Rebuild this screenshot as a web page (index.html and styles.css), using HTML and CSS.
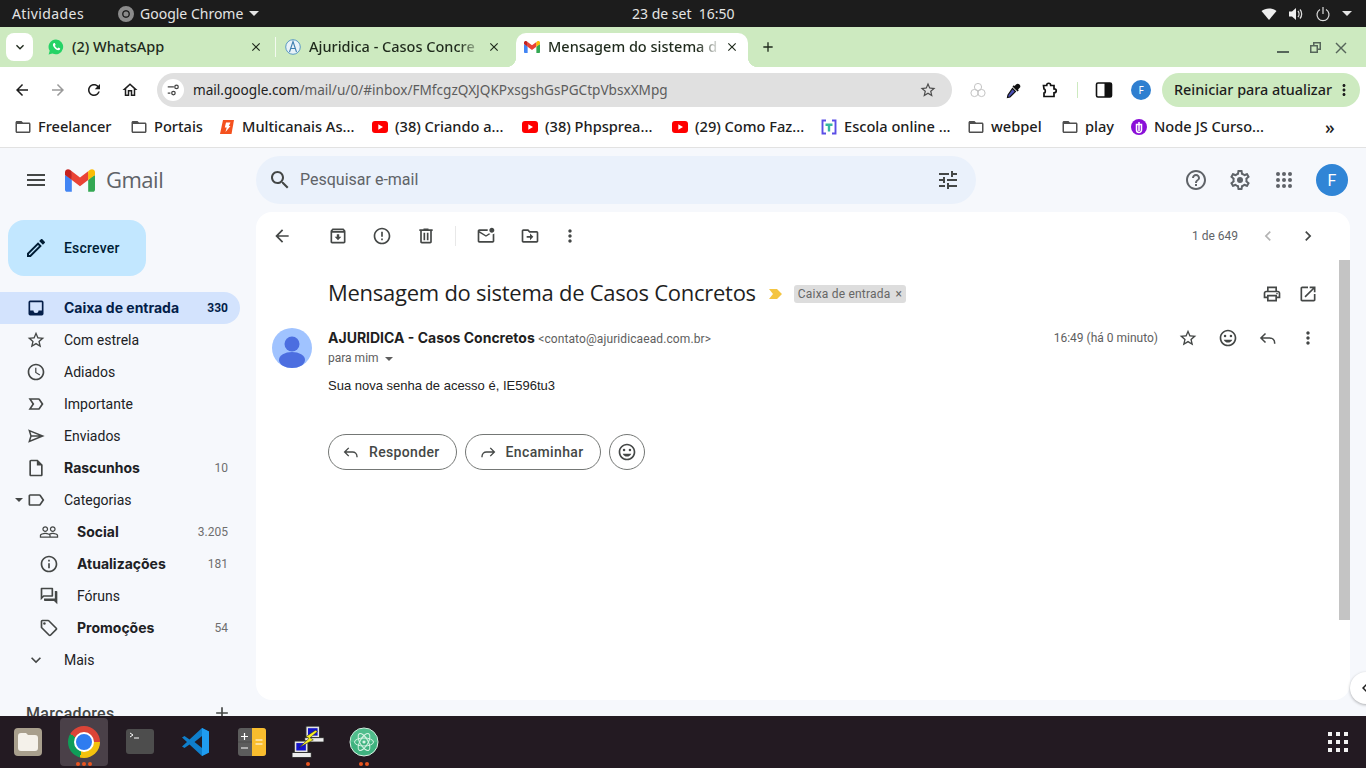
FILE: index.html
```html
<!DOCTYPE html>
<html lang="pt-BR">
<head>
    <meta charset="UTF-8">
    <title>Mensagem do sistema de Casos Concretos</title>
    <link rel="stylesheet" href="styles.css">
</head>
<body>
    <svg class="defs" width="0" height="0">
        <symbol id="i-back" viewBox="0 0 24 24"><path d="M20 11H7.83l5.59-5.59L12 4l-8 8 8 8 1.41-1.41L7.83 13H20v-2z"/></symbol>
        <symbol id="i-refresh" viewBox="0 0 24 24"><path d="M17.65 6.35C16.2 4.9 14.21 4 12 4c-4.42 0-7.99 3.58-7.99 8s3.57 8 7.99 8c3.73 0 6.84-2.55 7.73-6h-2.08c-.82 2.33-3.04 4-5.65 4-3.31 0-6-2.69-6-6s2.69-6 6-6c1.66 0 3.14.69 4.22 1.78L13 11h7V4l-2.35 2.35z"/></symbol>
        <symbol id="i-home" viewBox="0 0 24 24"><path d="M12 5.69l5 4.5V18h-2v-6H9v6H7v-7.81l5-4.5M12 3L2 12h3v8h6v-6h2v6h6v-8h3L12 3z"/></symbol>
        <symbol id="i-star" viewBox="0 0 24 24"><path d="M22 9.24l-7.19-.62L12 2 9.19 8.63 2 9.24l5.46 4.73L5.82 21 12 17.27 18.18 21l-1.63-7.03L22 9.24zM12 15.4l-3.76 2.27 1-4.28-3.32-2.88 4.38-.38L12 6.1l1.71 4.04 4.38.38-3.32 2.88 1 4.28L12 15.4z"/></symbol>
        <symbol id="i-folder" viewBox="0 0 24 24"><path d="M20 6h-8l-2-2H4c-1.1 0-2 .9-2 2v12c0 1.1.9 2 2 2h16c1.1 0 2-.9 2-2V8c0-1.1-.9-2-2-2zm0 12H4V8h16v10z"/></symbol>
        <symbol id="i-close" viewBox="0 0 24 24"><path d="M19 6.41L17.59 5 12 10.59 6.41 5 5 6.41 10.59 12 5 17.59 6.41 19 12 13.41 17.59 19 19 17.59 13.41 12z"/></symbol>
        <symbol id="i-add" viewBox="0 0 24 24"><path d="M19 13h-6v6h-2v-6H5v-2h6V5h2v6h6v2z"/></symbol>
        <symbol id="i-expand" viewBox="0 0 24 24"><path d="M16.59 8.59L12 13.17 7.41 8.59 6 10l6 6 6-6z"/></symbol>
        <symbol id="i-left" viewBox="0 0 24 24"><path d="M15.41 7.41L14 6l-6 6 6 6 1.41-1.41L10.83 12z"/></symbol>
        <symbol id="i-right" viewBox="0 0 24 24"><path d="M10 6L8.59 7.41 13.17 12l-4.58 4.59L10 18l6-6z"/></symbol>
        <symbol id="i-more" viewBox="0 0 24 24"><path d="M12 8c1.1 0 2-.9 2-2s-.9-2-2-2-2 .9-2 2 .9 2 2 2zm0 2c-1.1 0-2 .9-2 2s.9 2 2 2 2-.9 2-2-.9-2-2-2zm0 6c-1.1 0-2 .9-2 2s.9 2 2 2 2-.9 2-2-.9-2-2-2z"/></symbol>
        <symbol id="i-smile" viewBox="0 0 24 24"><path d="M11.99 2C6.47 2 2 6.48 2 12s4.47 10 9.99 10C17.52 22 22 17.52 22 12S17.52 2 11.99 2zM12 20c-4.42 0-8-3.58-8-8s3.58-8 8-8 8 3.58 8 8-3.58 8-8 8z"/><circle cx="8.5" cy="9.5" r="1.5"/><circle cx="15.5" cy="9.5" r="1.5"/><path d="M12 17.5c2.33 0 4.3-1.46 5.11-3.5H6.89c.8 2.04 2.78 3.5 5.11 3.5z"/></symbol>
        <symbol id="i-reply" viewBox="0 0 24 24"><path d="M9 6.5L3.5 12 9 17.5M4 12h10c3.3 0 6 2.4 6 6v1" fill="none" stroke="currentColor" stroke-width="1.8"/></symbol>
        <symbol id="i-forward" viewBox="0 0 24 24"><path d="M15 6.5l5.500 5.500-5.500 5.500M20 12H10c-3.300 0-6 2.400-6 6v1" fill="none" stroke="currentColor" stroke-width="1.8"/></symbol>
        <symbol id="i-youtube" viewBox="0 0 16 12"><rect width="16" height="12" rx="3" fill="#f00"/><path d="M6.300 3.200v5.600L11 6z" fill="#fff"/></symbol>
    </svg>

    <div class="topbar">
        <span class="activities">Atividades</span>
        <span class="app-menu">
            <span class="app-icon"></span>
            Google Chrome
            <span class="caret"></span>
        </span>
        <span class="clock">23 de set&nbsp; 16:50</span>
        <span class="tray">
            <svg class="tray-icon" viewBox="0 0 16 16"><path d="M8 14L.5 5C4.500 1.500 11.500 1.500 15.500 5z"/></svg>
            <svg class="tray-icon" viewBox="0 0 16 16"><path d="M1 5.500h3L8 2v12l-4-3.500H1z"/><path d="M10 5c1.300 1.600 1.300 4.400 0 6M12 3.500c2.200 2.500 2.200 6.500 0 9" fill="none" stroke="#ddd" stroke-width="1.300"/></svg>
            <svg class="tray-icon" viewBox="0 0 16 16"><path d="M5 3.500a6 6 0 1 0 6 0M8 1v7" fill="none" stroke="#ddd" stroke-width="1.200"/></svg>
            <span class="caret"></span>
        </span>
    </div>

    <div class="tabstrip">
        <span class="tab-search"><svg class="icon-16"><use href="#i-expand"/></svg></span>
        <div class="tab tab-first">
            <svg class="favicon" viewBox="0 0 16 16"><path d="M8 .500A7.400 7.400 0 0 0 1.700 11.800L.6 15.500l3.800-1A7.400 7.400 0 1 0 8 .500z" fill="#25d366"/><path d="M5.600 4.200c-1 .9-1 2.300.3 4 1.300 1.800 3 3 4.500 3.100 1 0 1.900-.8 1.800-1.700L10.500 8.500l-1 1C8.400 9 7.400 8 6.800 6.800l.9-.9L6.800 4c-.4 0-.9 0-1.200.2z" fill="#fff"/></svg>
            <span class="tab-title plain">(2) WhatsApp</span>
            <svg class="tab-close"><use href="#i-close"/></svg>
        </div>
        <span class="tab-sep"></span>
        <div class="tab tab-second">
            <svg class="favicon" viewBox="0 0 16 16"><circle cx="8" cy="8" r="7.300" fill="#e8f2f8" stroke="#5b9ac4"/><path d="M4.500 13L8 2.500l3.500 10.500M5.500 9.500h5" fill="none" stroke="#3f7fb0" stroke-width="1.100"/></svg>
            <span class="tab-title">Ajuridica - Casos Concre</span>
            <svg class="tab-close"><use href="#i-close"/></svg>
        </div>
        <div class="tab tab-active">
            <svg class="favicon" viewBox="0 0 256 193"><use href="#gmail-m"/></svg>
            <span class="tab-title">Mensagem do sistema d</span>
            <svg class="tab-close"><use href="#i-close"/></svg>
        </div>
        <svg class="new-tab"><use href="#i-add"/></svg>
        <span class="window-controls">
            <svg class="win-icon win-min" viewBox="0 0 14 14"><rect x="1" y="10" width="12" height="2"/></svg>
            <svg class="win-icon" viewBox="0 0 14 14"><path d="M5 1h8v8h-3v3H2V4h3zm1.500 1.500V4H10v3.500h1.500v-5zM3.500 5.500v5h5v-5z"/></svg>
            <svg class="win-icon" viewBox="0 0 14 14"><path d="M2.500 1.500l4.500 4.500 4.500-4.500 1 1L8 7l4.500 4.500-1 1L7 8l-4.500 4.500-1-1L6 7 1.500 2.500z"/></svg>
        </span>
    </div>

    <div class="toolbar">
        <svg class="nav-icon"><use href="#i-back"/></svg>
        <svg class="nav-icon nav-off"><use href="#i-back" transform="matrix(-1 0 0 1 18 0)"/></svg>
        <svg class="nav-icon"><use href="#i-refresh"/></svg>
        <svg class="nav-icon"><use href="#i-home"/></svg>
        <div class="omnibox">
            <span class="site-info">
                <svg viewBox="0 0 16 16" width="14" height="14"><path d="M2 4.500h7M2 11.500h3" stroke="#444" stroke-width="1.500" fill="none"/><circle cx="12" cy="4.500" r="2" fill="none" stroke="#444" stroke-width="1.400"/><circle cx="8.500" cy="11.500" r="2" fill="none" stroke="#444" stroke-width="1.400"/></svg>
            </span>
            <span class="url"><b>mail.google.com</b>/mail/u/0/#inbox/FMfcgzQXJQKPxsgshGsPGCtpVbsxXMpg</span>
            <svg class="omni-star"><use href="#i-star"/></svg>
        </div>
        <div class="extensions">
            <svg class="ext-icon" viewBox="0 0 18 18"><g fill="none" stroke="#c4c4c4"><circle cx="9" cy="6" r="3.600"/><circle cx="5.500" cy="12" r="3.600"/><circle cx="12.500" cy="12" r="3.600"/></g></svg>
            <svg class="ext-icon" viewBox="0 0 18 18"><path d="M7.500 7.500l3 3L5 16l-2.500.5.500-2.500z" fill="#4a4fb5" stroke="#111" stroke-width="1.200"/><path d="M11 3.500a2.300 2.300 0 0 1 3.500 3.500L13 8.500l.8.8-1.300 1.300-5-5 1.300-1.300.8.8z" fill="#111"/></svg>
            <svg class="ext-icon" viewBox="0 0 18 18"><path d="M2.500 4.500h3.200c0-3 4-3 4 0h3.300v3.300c3 0 3 4 0 4v3.700H3v-3.300c1.700 0 1.700-4.200 0-4.200z" fill="none" stroke="#111" stroke-width="1.700"/></svg>
            <span class="ext-sep"></span>
            <svg class="ext-icon" viewBox="0 0 18 18"><rect x="1.500" y="2" width="15" height="14" rx="1.500" fill="#fff" stroke="#111" stroke-width="1.600"/><rect x="9.500" y="2" width="7" height="14" fill="#111"/></svg>
            <span class="small-avatar">F</span>
        </div>
        <div class="update-pill">
            <span class="pill-text">Reiniciar para atualizar</span>
            <svg class="icon-18"><use href="#i-more"/></svg>
        </div>
    </div>

    <div class="bookmarks">
        <span class="bookmark"><svg class="bm-folder"><use href="#i-folder"/></svg>Freelancer</span>
        <span class="bookmark"><svg class="bm-folder"><use href="#i-folder"/></svg>Portais</span>
        <span class="bookmark"><svg class="bm-icon" viewBox="0 0 16 16"><path d="M4 1h11l-2.500 14H1z" fill="#f4511e"/><path d="M7 3.500h4.500L9.800 7h1.700L6.500 13l1.200-4.500H5.800z" fill="#fff"/></svg>Multicanais As...</span>
        <span class="bookmark"><svg class="bm-icon"><use href="#i-youtube"/></svg>(38) Criando a...</span>
        <span class="bookmark"><svg class="bm-icon"><use href="#i-youtube"/></svg>(38) Phpsprea...</span>
        <span class="bookmark"><svg class="bm-icon"><use href="#i-youtube"/></svg>(29) Como Faz...</span>
        <span class="bookmark"><svg class="bm-icon" viewBox="0 0 16 16"><path d="M5 1.500H1.500v13H5M11 1.500h3.500v13H11" fill="none" stroke="#5b4ee6" stroke-width="1.900"/><path d="M4.500 4.500h7V7H9.200v5.500H6.800V7H4.500z" fill="#35b6a0"/></svg>Escola online ...</span>
        <span class="bookmark"><svg class="bm-folder"><use href="#i-folder"/></svg>webpel</span>
        <span class="bookmark"><svg class="bm-folder"><use href="#i-folder"/></svg>play</span>
        <span class="bookmark"><svg class="bm-icon" viewBox="0 0 16 16"><circle cx="8" cy="8" r="8" fill="#8a0fd8"/><path d="M5.500 5.500h5v5.500a2.500 2.500 0 0 1-5 0zM8 3v9" fill="none" stroke="#fff" stroke-width="1.500"/></svg>Node JS Curso...</span>
        <span class="bm-more">»</span>
    </div>

    <div class="gmail">
        <aside class="sidebar">
            <div class="brand">
                <svg class="icon-24 menu-icon" viewBox="0 0 24 24"><path d="M3 18h18v-2H3v2zm0-5h18v-2H3v2zm0-7v2h18V6H3z"/></svg>
                <svg class="gmail-logo" viewBox="0 0 256 193">
                    <g id="gmail-m">
                        <path fill="#4285F4" d="M58.180 192.050V93.140L27.500 65.080 0 49.500v125.090c0 9.660 7.830 17.460 17.450 17.460h40.730z"/>
                        <path fill="#34A853" d="M197.820 192.050h40.730c9.650 0 17.450-7.830 17.450-17.450V49.500l-31.160 17.840-27.020 25.800v98.910z"/>
                        <path fill="#EA4335" d="M58.180 93.140l-4.170-38.650 4.170-36.990L128 69.870l69.820-52.370 4.670 35-4.670 40.640L128 145.500z"/>
                        <path fill="#FBBC04" d="M197.820 17.500V93.140L256 49.500V26.230c0-21.580-24.640-33.890-41.890-20.950z"/>
                        <path fill="#C5221F" d="M0 49.500l26.760 20.070L58.180 93.140V17.500L41.890 5.280C24.610-7.660 0 4.650 0 26.230V49.500z"/>
                    </g>
                </svg>
                <span class="wordmark">Gmail</span>
            </div>
            <div class="compose">
                <svg class="icon-24" viewBox="0 0 24 24"><path d="M14.060 9.020l.92.920L5.920 19H5v-.92l9.060-9.060M17.660 3c-.25 0-.51.100-.7.290l-1.830 1.830 3.750 3.750 1.830-1.830c.39-.39.39-1.020 0-1.410l-2.340-2.340c-.2-.2-.45-.29-.71-.29zm-3.600 3.190L3 17.250V21h3.750L17.810 9.940l-3.750-3.750z"/></svg>
                Escrever
            </div>
            <nav class="nav-list">
                <a class="nav-row selected bold">
                    <svg class="nav-glyph" viewBox="0 0 24 24"><path d="M19 3H5a2 2 0 0 0-2 2v14a2 2 0 0 0 2 2h14a2 2 0 0 0 2-2V5a2 2 0 0 0-2-2zm0 12h-4a3 3 0 0 1-6 0H5V5h14z"/></svg>
                    <span class="nav-label">Caixa de entrada</span><span class="count">330</span>
                </a>
                <a class="nav-row"><svg class="nav-glyph"><use href="#i-star"/></svg><span class="nav-label">Com estrela</span></a>
                <a class="nav-row">
                    <svg class="nav-glyph" viewBox="0 0 24 24"><path d="M11.990 2C6.470 2 2 6.480 2 12s4.470 10 9.990 10C17.520 22 22 17.520 22 12S17.520 2 11.990 2zM12 20c-4.420 0-8-3.580-8-8s3.580-8 8-8 8 3.580 8 8-3.580 8-8 8zm.5-13H11v6l5.250 3.150.75-1.230-4.500-2.670z"/></svg>
                    <span class="nav-label">Adiados</span>
                </a>
                <a class="nav-row">
                    <svg class="nav-glyph" viewBox="0 0 24 24"><path d="M15 19H3l4.500-7L3 5h12c.65 0 1.260.310 1.630.840L21 12l-4.370 6.160c-.37.520-.98.840-1.630.840zm-8.500-2H15l3.500-5-3.500-5H6.500l3.500 5-3.500 5z"/></svg>
                    <span class="nav-label">Importante</span>
                </a>
                <a class="nav-row">
                    <svg class="nav-glyph" viewBox="0 0 24 24"><path d="M4 5.500l16 6.500-16 6.500 2-6.500zM6 12h14" fill="none" stroke="currentColor" stroke-width="1.800"/></svg>
                    <span class="nav-label">Enviados</span>
                </a>
                <a class="nav-row bold">
                    <svg class="nav-glyph" viewBox="0 0 24 24"><path d="M14 2H6c-1.100 0-1.990.9-1.990 2L4 20c0 1.100.89 2 1.990 2H18c1.100 0 2-.9 2-2V8l-6-6zM6 20V4h7v5h5v11H6z"/></svg>
                    <span class="nav-label">Rascunhos</span><span class="count">10</span>
                </a>
                <a class="nav-row">
                    <span class="tree-caret"></span>
                    <svg class="nav-glyph" viewBox="0 0 24 24"><path d="M17.630 5.840C17.270 5.330 16.670 5 16 5L5 5.010C3.900 5.010 3 5.900 3 7v10c0 1.100.9 1.990 2 1.990L16 19c.67 0 1.270-.33 1.630-.84L22 12l-4.370-6.160zM16 17H5V7h11l3.550 5L16 17z"/></svg>
                    <span class="nav-label">Categorias</span>
                </a>
                <a class="nav-row sub bold">
                    <svg class="nav-glyph" viewBox="0 0 24 24"><path d="M16.500 13c-1.200 0-3.070.34-4.500 1-1.430-.67-3.300-1-4.500-1C5.330 13 1 14.080 1 16.250V19h22v-2.750c0-2.170-4.330-3.250-6.500-3.250zm-4 4.500h-10v-1.250c0-.54 2.560-1.750 5-1.750s5 1.210 5 1.750v1.250zm9 0H14v-1.250c0-.46-.2-.86-.52-1.220.88-.3 1.960-.53 3.020-.53 2.440 0 5 1.210 5 1.750v1.250zM7.500 12c1.930 0 3.500-1.570 3.500-3.500S9.430 5 7.500 5 4 6.570 4 8.500 5.570 12 7.500 12zm0-5.500c1.100 0 2 .9 2 2s-.9 2-2 2-2-.9-2-2 .9-2 2-2zm9 5.500c1.930 0 3.500-1.570 3.500-3.500S18.430 5 16.500 5 13 6.570 13 8.500s1.570 3.500 3.500 3.500zm0-5.500c1.100 0 2 .9 2 2s-.9 2-2 2-2-.9-2-2 .9-2 2-2z"/></svg>
                    <span class="nav-label">Social</span><span class="count">3.205</span>
                </a>
                <a class="nav-row sub bold">
                    <svg class="nav-glyph" viewBox="0 0 24 24"><path d="M11 7h2v2h-2zm0 4h2v6h-2zm1-9C6.480 2 2 6.480 2 12s4.480 10 10 10 10-4.480 10-10S17.520 2 12 2zm0 18c-4.410 0-8-3.590-8-8s3.590-8 8-8 8 3.590 8 8-3.590 8-8 8z"/></svg>
                    <span class="nav-label">Atualizações</span><span class="count">181</span>
                </a>
                <a class="nav-row sub">
                    <svg class="nav-glyph" viewBox="0 0 24 24"><path d="M15 4v7H5.170L4 12.170V4h11m1-2H3c-.55 0-1 .45-1 1v14l4-4h10c.55 0 1-.45 1-1V3c0-.55-.45-1-1-1zm5 4h-2v9H6v2c0 .55.45 1 1 1h11l4 4V7c0-.55-.45-1-1-1z"/></svg>
                    <span class="nav-label">Fóruns</span>
                </a>
                <a class="nav-row sub bold">
                    <svg class="nav-glyph" viewBox="0 0 24 24"><path d="M21.410 11.580l-9-9C12.050 2.220 11.550 2 11 2H4c-1.100 0-2 .9-2 2v7c0 .55.22 1.050.59 1.420l9 9c.36.36.86.58 1.410.58s1.050-.22 1.410-.59l7-7c.37-.36.59-.86.59-1.410s-.23-1.060-.59-1.420zM13 20.010L4 11V4h7v-.01l9 9-7 7.020z"/><circle cx="6.500" cy="6.500" r="1.500"/></svg>
                    <span class="nav-label">Promoções</span><span class="count">54</span>
                </a>
                <a class="nav-row"><svg class="nav-glyph"><use href="#i-expand"/></svg><span class="nav-label">Mais</span></a>
            </nav>
            <div class="labels-head">
                <span>Marcadores</span>
                <svg class="icon-20"><use href="#i-add"/></svg>
            </div>
        </aside>

        <main class="content">
            <header class="gm-header">
                <div class="searchbox">
                    <svg class="icon-24" viewBox="0 0 24 24"><path d="M15.500 14h-.79l-.28-.27C15.410 12.590 16 11.110 16 9.500 16 5.910 13.090 3 9.500 3S3 5.910 3 9.500 5.910 16 9.500 16c1.610 0 3.090-.59 4.230-1.570l.27.28v.79l5 4.990L20.490 19l-4.990-5zm-6 0C7.010 14 5 11.990 5 9.500S7.010 5 9.500 5 14 7.010 14 9.500 11.990 14 9.500 14z"/></svg>
                    <span class="search-text">Pesquisar e-mail</span>
                    <svg class="icon-24" viewBox="0 0 24 24"><path d="M3 17v2h6v-2H3zM3 5v2h10V5H3zm10 16v-2h8v-2h-8v-2h-2v6h2zM7 9v2H3v2h4v2h2V9H7zm14 4v-2H11v2h10zm-6-4h2V7h4V5h-4V3h-2v6z"/></svg>
                </div>
                <div class="header-actions">
                    <svg class="icon-24" viewBox="0 0 24 24"><path d="M11 18h2v-2h-2v2zm1-16C6.480 2 2 6.480 2 12s4.480 10 10 10 10-4.480 10-10S17.520 2 12 2zm0 18c-4.410 0-8-3.590-8-8s3.590-8 8-8 8 3.590 8 8-3.590 8-8 8zm0-14c-2.210 0-4 1.790-4 4h2c0-1.100.9-2 2-2s2 .9 2 2c0 2-3 1.750-3 5h2c0-2.250 3-2.500 3-5 0-2.210-1.790-4-4-4z"/></svg>
                    <svg class="icon-24" viewBox="0 0 24 24"><path d="M19.430 12.980c.04-.32.07-.64.07-.98 0-.34-.03-.66-.07-.98l2.110-1.650c.19-.15.24-.42.12-.64l-2-3.460c-.09-.16-.26-.25-.44-.25-.06 0-.12.010-.17.030l-2.490 1c-.52-.4-1.080-.73-1.690-.98l-.38-2.650C14.460 2.180 14.250 2 14 2h-4c-.25 0-.46.180-.49.420l-.38 2.650c-.61.250-1.170.590-1.690.980l-2.490-1c-.06-.02-.12-.03-.18-.03-.17 0-.34.090-.43.250l-2 3.460c-.13.220-.07.490.12.640l2.110 1.650c-.04.320-.07.650-.07.980 0 .33.030.66.070.98l-2.110 1.650c-.19.150-.24.420-.12.640l2 3.460c.09.160.26.250.44.250.06 0 .12-.01.17-.03l2.490-1c.52.400 1.080.730 1.690.980l.38 2.650c.03.240.24.420.49.420h4c.25 0 .46-.18.49-.42l.38-2.650c.61-.25 1.170-.59 1.690-.98l2.490 1c.06.020.12.030.18.030.17 0 .34-.09.43-.25l2-3.460c.12-.22.07-.49-.12-.64l-2.110-1.650zm-1.980-1.710c.04.310.05.520.05.730 0 .21-.02.430-.05.730l-.14 1.130.89.700 1.080.840-.7 1.210-1.270-.51-1.040-.42-.9.680c-.43.320-.84.560-1.250.730l-1.060.430-.16 1.130-.2 1.350h-1.400l-.19-1.350-.16-1.130-1.060-.43c-.43-.18-.83-.41-1.230-.71l-.91-.7-1.060.43-1.270.51-.7-1.210 1.080-.84.89-.7-.14-1.130c-.03-.31-.05-.54-.05-.74s.02-.43.05-.73l.14-1.130-.89-.7-1.080-.84.7-1.210 1.270.51 1.040.42.9-.68c.43-.32.84-.56 1.250-.73l1.060-.43.16-1.130.2-1.350h1.390l.19 1.350.16 1.130 1.060.43c.43.180.83.410 1.230.710l.91.700 1.060-.43 1.270-.51.7 1.210-1.070.850-.89.700.14 1.130z"/><circle cx="12" cy="12" r="3"/></svg>
                    <svg class="icon-24" viewBox="0 0 24 24"><g><circle cx="6" cy="6" r="2"/><circle cx="12" cy="6" r="2"/><circle cx="18" cy="6" r="2"/><circle cx="6" cy="12" r="2"/><circle cx="12" cy="12" r="2"/><circle cx="18" cy="12" r="2"/><circle cx="6" cy="18" r="2"/><circle cx="12" cy="18" r="2"/><circle cx="18" cy="18" r="2"/></g></svg>
                    <span class="account">F</span>
                </div>
            </header>

            <section class="card">
                <div class="mail-toolbar">
                    <svg class="tool tool-back"><use href="#i-back"/></svg>
                    <svg class="tool" viewBox="0 0 24 24"><path d="M20.540 5.230l-1.390-1.680C18.880 3.210 18.470 3 18 3H6c-.47 0-.88.210-1.160.550L3.460 5.230C3.170 5.570 3 6.020 3 6.500V19c0 1.100.9 2 2 2h14c1.100 0 2-.9 2-2V6.500c0-.48-.17-.93-.46-1.270zM6.240 5h11.520l.83 1H5.420l.82-1zM5 19V8h14v11H5zm8.450-9h-2.900v3H8l4 4 4-4h-2.550z"/></svg>
                    <svg class="tool" viewBox="0 0 24 24"><path d="M11 15h2v2h-2zm0-8h2v6h-2zm1-5C6.480 2 2 6.480 2 12s4.480 10 10 10 10-4.480 10-10S17.520 2 12 2zm0 18c-4.410 0-8-3.590-8-8s3.590-8 8-8 8 3.590 8 8-3.590 8-8 8z"/></svg>
                    <svg class="tool" viewBox="0 0 24 24"><path d="M15 4V3H9v1H4v2h1v13c0 1.100.9 2 2 2h10c1.100 0 2-.9 2-2V6h1V4h-5zm2 15H7V6h10v13zM9 8h2v9H9zm4 0h2v9h-2z"/></svg>
                    <span class="tool-sep"></span>
                    <svg class="tool" viewBox="0 0 24 24"><path d="M22 8.980V18c0 1.100-.9 2-2 2H4c-1.100 0-2-.9-2-2V6c0-1.100.9-2 2-2h10.100c-.06.320-.1.660-.1 1 0 .34.040.680.1 1H4l8 5 3.670-2.290c.47.430 1.020.760 1.630.980L12 13 4 8v10h16V9.900c.74-.15 1.420-.48 2-.92zM16 5c0 1.660 1.340 3 3 3s3-1.340 3-3-1.340-3-3-3-3 1.340-3 3z"/></svg>
                    <svg class="tool" viewBox="0 0 24 24"><path d="M20 6h-8l-2-2H4c-1.100 0-2 .9-2 2v12c0 1.100.9 2 2 2h16c1.100 0 2-.9 2-2V8c0-1.100-.9-2-2-2zm0 12H4V6h5.170l2 2H20v10zm-8-1l4-4-4-4v3H8v2h4v3z"/></svg>
                    <svg class="tool tool-more"><use href="#i-more"/></svg>
                    <span class="pager">1 de 649</span>
                    <svg class="tool tool-prev"><use href="#i-left"/></svg>
                    <svg class="tool tool-next"><use href="#i-right"/></svg>
                </div>

                <div class="subject-row">
                    <h1 class="subject">Mensagem do sistema de Casos Concretos</h1>
                    <svg class="marker" viewBox="0 0 14 10"><path d="M0 0h8l5 5-5 5H0l4-5z"/></svg>
                    <span class="chip">Caixa de entrada <i>×</i></span>
                    <span class="subject-actions">
                        <svg class="tool" viewBox="0 0 24 24"><path d="M19 8h-1V3H6v5H5c-1.660 0-3 1.340-3 3v6h4v4h12v-4h4v-6c0-1.660-1.340-3-3-3zM8 5h8v3H8V5zm8 14H8v-4h8v4zm2-4v-2H6v2H4v-4c0-.55.45-1 1-1h14c.55 0 1 .45 1 1v4h-2z"/><circle cx="18" cy="11.500" r="1"/></svg>
                        <svg class="tool" viewBox="0 0 24 24"><path d="M19 19H5V5h7V3H5c-1.110 0-2 .9-2 2v14c0 1.100.89 2 2 2h14c1.100 0 2-.9 2-2v-7h-2v7zM14 3v2h3.590l-9.830 9.830 1.410 1.410L19 6.410V10h2V3h-7z"/></svg>
                    </span>
                </div>

                <div class="message">
                    <svg class="avatar" viewBox="0 0 40 40"><circle cx="20" cy="20" r="20" fill="#a0c3ff"/><circle cx="20" cy="16" r="7.500" fill="#4c6ee0"/><ellipse cx="20" cy="32" rx="13" ry="8" fill="#4c6ee0"/></svg>
                    <div class="message-main">
                        <div class="sender-row">
                            <div class="sender">
                                <strong>AJURIDICA - Casos Concretos</strong>
                                <span class="address">&lt;contato@ajuridicaead.com.br&gt;</span>
                            </div>
                            <span class="time">16:49 (há 0 minuto)</span>
                            <svg class="tool msg-star"><use href="#i-star"/></svg>
                            <svg class="tool msg-action"><use href="#i-smile"/></svg>
                            <svg class="tool msg-action"><use href="#i-reply"/></svg>
                            <svg class="tool msg-action"><use href="#i-more"/></svg>
                        </div>
                        <div class="to-me">para mim <span class="to-caret"></span></div>
                        <p class="body-text">Sua nova senha de acesso é, IE596tu3</p>
                        <div class="reply-buttons">
                            <span class="pill-btn"><svg class="tool"><use href="#i-reply"/></svg>Responder</span>
                            <span class="pill-btn"><svg class="tool"><use href="#i-forward"/></svg>Encaminhar</span>
                            <span class="emoji-btn"><svg class="tool"><use href="#i-smile"/></svg></span>
                        </div>
                    </div>
                </div>
                <div class="scroll-thumb"></div>
            </section>
            <span class="panel-toggle"><svg class="icon-18"><use href="#i-left"/></svg></span>
        </main>
    </div>

    <div class="dock">
        <div class="dock-item">
            <svg class="dock-icon" viewBox="0 0 30 30"><rect x="1" y="1" width="28" height="28" rx="4" fill="#a89f8d"/><path d="M5 9a3 3 0 0 1 3-3h5l2 2h7a3 3 0 0 1 3 3v10a3 3 0 0 1-3 3H8a3 3 0 0 1-3-3z" fill="#f4f1ea"/></svg>
        </div>
        <div class="dock-item active">
            <span class="chrome-logo"></span>
            <span class="dots"><i></i><i></i><i></i></span>
        </div>
        <div class="dock-item">
            <svg class="dock-icon" viewBox="0 0 30 30"><rect x="1" y="2" width="28" height="25" rx="3" fill="#4d4d4d"/><path d="M5 6l3 2-3 2" fill="none" stroke="#fff"/><path d="M9 11h5" stroke="#fff"/></svg>
        </div>
        <div class="dock-item">
            <svg class="dock-icon" viewBox="0 0 30 30"><path d="M21 1l7 3.500v21L21 29 8.500 17.500 3.500 21 1 19.500 6 15 1 10.500 3.500 9l5 3.500z" fill="#0f7fcc"/><path d="M21 1l7 3.500v21L21 29z" fill="#1f9cf0"/><path d="M21 9l-7.500 6 7.500 6z" fill="#231a22"/></svg>
        </div>
        <div class="dock-item">
            <svg class="dock-icon" viewBox="0 0 30 30"><rect x="1" y="1" width="28" height="28" rx="3" fill="#5c5c5c"/><path d="M15 1h11a3 3 0 0 1 3 3v22a3 3 0 0 1-3 3H15z" fill="#f9bd2e"/><path d="M4 9.500h7M7.500 6v7M4 21h7M18.500 13h7M18.500 17h7" stroke="#fff" stroke-width="1.200"/><path d="M1 15h14" stroke="#4a4a4a"/></svg>
        </div>
        <div class="dock-item">
            <svg class="dock-icon dock-icon-lg" viewBox="0 0 32 32"><rect x="14" y="1" width="13" height="11" fill="#e4e4e4" stroke="#222"/><rect x="16" y="3" width="9" height="7" fill="#1313c8"/><rect x="13" y="12" width="18" height="4" fill="#ededed" stroke="#222" stroke-width=".7"/><rect x="3" y="15" width="13" height="11" fill="#e4e4e4" stroke="#222"/><rect x="5" y="17" width="9" height="7" fill="#1313c8"/><rect x="1" y="26" width="18" height="4.500" fill="#ededed" stroke="#222" stroke-width=".7"/><path d="M23 5l-9 6 3 1.500L8 21l13-7-3-2 7-6z" fill="#f7ef24" stroke="#222" stroke-width=".5"/></svg>
            <span class="dots"><i></i></span>
        </div>
        <div class="dock-item">
            <svg class="dock-icon" viewBox="0 0 30 30"><circle cx="15" cy="15" r="14" fill="#3fb27f" stroke="#dff3e8" stroke-width="1"/><path d="M15 1.500A13.500 13.500 0 0 1 28.500 15h-27A13.500 13.500 0 0 1 15 1.500z" fill="#62c79a" opacity=".5"/><g fill="none" stroke="#d8f3e4" stroke-width="1"><ellipse cx="15" cy="15" rx="9.500" ry="4"/><ellipse cx="15" cy="15" rx="9.500" ry="4" transform="rotate(60 15 15)"/><ellipse cx="15" cy="15" rx="9.500" ry="4" transform="rotate(120 15 15)"/></g><circle cx="15" cy="15" r="1.600" fill="#d8f3e4"/></svg>
            <span class="dots"><i></i><i></i></span>
        </div>
        <div class="show-apps">
            <i></i><i></i><i></i><i></i><i></i><i></i><i></i><i></i><i></i>
        </div>
    </div>
</body>
</html>
```
FILE: styles.css
```css
* {
    box-sizing: border-box;
}

html, body {
    margin: 0;
    height: 100%;
    overflow: hidden;
}

body {
    width: 1366px;
    height: 768px;
    display: flex;
    flex-direction: column;
    font-family: "Noto Sans", sans-serif;
    background-color: #ffffff;
}

svg {
    fill: currentColor;
    flex-shrink: 0;
}

.defs {
    position: absolute;
}

.icon-16 { width: 16px; height: 16px; }
.icon-18 { width: 18px; height: 18px; }
.icon-20 { width: 20px; height: 20px; }
.icon-24 { width: 24px; height: 24px; }

/* ubuntu top bar */
.topbar {
    height: 27px;
    display: flex;
    align-items: center;
    padding: 0 12px;
    background-color: #1c1c1c;
    color: #e4e4e4;
    font-size: 14px;
    position: relative;
}

.activities {
    width: 106px;
    letter-spacing: 0.4px;
}

.app-menu {
    display: flex;
    align-items: center;
    gap: 6px;
}

.app-icon {
    width: 16px;
    height: 16px;
    border-radius: 50%;
    background-color: #8b8b8b;
    border: 4px solid #8b8b8b;
    box-shadow: inset 0 0 0 1.5px #222;
}

.caret {
    width: 0;
    height: 0;
    border-left: 5px solid transparent;
    border-right: 5px solid transparent;
    border-top: 5px solid #e4e4e4;
}

.clock {
    position: absolute;
    left: 632px;
}

.tray {
    margin-left: auto;
    display: flex;
    align-items: center;
    gap: 11px;
    padding-right: 2px;
}

.tray-icon {
    width: 16px;
    height: 16px;
    color: #eeeeee;
}

/* chrome tabs */
.tabstrip {
    height: 40px;
    display: flex;
    align-items: flex-end;
    padding-left: 6px;
    background-color: #cdeac0;
    color: #1f2a1c;
    font-size: 14.5px;
}

.tab-search {
    width: 27px;
    height: 28px;
    margin-bottom: 6px;
    margin-right: 3px;
    display: flex;
    align-items: center;
    justify-content: center;
    border-radius: 8px;
    background-color: #ffffff;
}

.tab {
    height: 34px;
    display: flex;
    align-items: center;
    padding-bottom: 6px;
    position: relative;
}

.tab-first {
    width: 239px;
    padding-left: 12px;
    padding-right: 12px;
}

.tab-second {
    width: 240px;
    padding-left: 9px;
    padding-right: 15px;
}

.tab-title {
    flex: 1;
    min-width: 0;
    margin-left: 8px;
    padding-bottom: 2px;
    white-space: nowrap;
    font-weight: 500;
    -webkit-mask-image: linear-gradient(to left, transparent 0, #000 24px);
    mask-image: linear-gradient(to left, transparent 0, #000 24px);
}

.tab-title.plain {
    -webkit-mask-image: none;
    mask-image: none;
}

.favicon {
    width: 16px;
    height: 16px;
}

.tab-close {
    width: 14px;
    height: 14px;
    margin-left: 4px;
}

.tab-sep {
    width: 1px;
    height: 20px;
    margin-bottom: 10px;
    background-color: #f4faf0;
}

.tab-active {
    width: 232px;
    padding-left: 8px;
    padding-right: 9px;
    background-color: #ffffff;
    border-radius: 10px 10px 0 0;
}

.tab-active::before,
.tab-active::after {
    content: "";
    position: absolute;
    bottom: 0;
    width: 10px;
    height: 10px;
}

.tab-active::before {
    left: -10px;
    background: radial-gradient(circle at 0 0, transparent 10px, #ffffff 10.5px);
}

.tab-active::after {
    right: -10px;
    background: radial-gradient(circle at 100% 0, transparent 10px, #ffffff 10.5px);
}

.new-tab {
    width: 16px;
    height: 16px;
    margin: 0 0 12px 12px;
}

.window-controls {
    margin-left: auto;
    display: flex;
    gap: 12px;
    padding: 0 18px 12px 0;
    color: #56665a;
}

.win-icon {
    width: 14px;
    height: 14px;
}

.win-min {
    margin-right: 6px;
}

/* chrome toolbar */
.toolbar {
    height: 46px;
    display: flex;
    align-items: center;
    padding: 0 6px 0 13px;
    background-color: #ffffff;
    color: #1d1d1d;
    border-radius: 10px 10px 0 0;
    position: relative;
}

.nav-icon {
    width: 18px;
    height: 18px;
    margin-right: 18px;
}

.nav-off {
    color: #9a9a9a;
}

.omnibox {
    width: 795px;
    height: 34px;
    display: flex;
    align-items: center;
    padding-left: 5px;
    border-radius: 17px;
    background-color: #e0e0e0;
    color: #5c5c5c;
    font-size: 13.6px;
}

.site-info {
    width: 22px;
    height: 22px;
    display: flex;
    align-items: center;
    justify-content: center;
    border-radius: 50%;
    background-color: #ffffff;
}

.url {
    flex: 1;
    margin-left: 9px;
    padding-bottom: 2px;
    white-space: nowrap;
}

.url b {
    font-weight: 400;
    color: #222222;
}

.omni-star {
    width: 18px;
    height: 18px;
    margin-right: 15px;
    color: #4c4c4c;
}

.extensions {
    display: flex;
    align-items: center;
    width: 210px;
    padding-left: 17px;
}

.ext-icon {
    width: 18px;
    height: 18px;
    margin-right: 18px;
}

.ext-sep {
    width: 1px;
    height: 16px;
    margin: 0 17px 0 0;
    background-color: #cdeac0;
}

.small-avatar {
    width: 20px;
    height: 20px;
    border-radius: 50%;
    background-color: #2f7fd0;
    color: #ffffff;
    font-size: 10px;
    display: flex;
    align-items: center;
    justify-content: center;
}

.update-pill {
    width: 198px;
    height: 34px;
    display: flex;
    align-items: center;
    justify-content: space-between;
    padding: 0 7px 0 12px;
    border-radius: 17px;
    background-color: #cdeac0;
    font-size: 14.4px;
    font-weight: 500;
}

.pill-text {
    padding-bottom: 2px;
}

/* bookmarks */
.bookmarks {
    height: 35px;
    padding: 0 0 6px 15px;
    display: grid;
    grid-template-columns: 116px 88px 153px 150px 150px 149px 147px 94px 69px 194px auto;
    align-items: center;
    border-bottom: 1px solid #e2e2e2;
    color: #202020;
    font-size: 14.6px;
    font-weight: 500;
}

.bookmark {
    display: flex;
    align-items: center;
    gap: 7px;
    padding-bottom: 2px;
    white-space: nowrap;
}

.bm-folder {
    width: 18px;
    height: 18px;
    color: #4f4f4f;
    margin: 2px -1px 0 -1px;
}

.bm-icon {
    width: 16px;
    height: 16px;
    margin-top: 2px;
}

.bm-more {
    font-size: 18px;
    line-height: 18px;
}

/* gmail */
.gmail {
    flex: 1;
    min-height: 0;
    display: flex;
    background-color: #f6f8fc;
    color: #1f1f1f;
    font-family: Roboto, sans-serif;
    overflow: hidden;
}

.sidebar {
    width: 256px;
    flex-shrink: 0;
    overflow: hidden;
}

.brand {
    height: 64px;
    display: flex;
    align-items: center;
    padding-left: 24px;
    color: #444746;
}

.gmail-logo {
    width: 30px;
    height: 23px;
    margin-left: 17px;
}

.wordmark {
    margin-left: 11px;
    padding-bottom: 2px;
    font-family: "Open Sans", sans-serif;
    font-size: 22px;
    letter-spacing: -0.5px;
    color: #5f6368;
}

.compose {
    width: 138px;
    height: 56px;
    margin: 8px 0 16px 8px;
    display: flex;
    align-items: center;
    gap: 16px;
    padding-left: 16px;
    border-radius: 16px;
    background-color: #c2e7ff;
    color: #001d35;
    font-size: 14px;
    font-weight: 500;
    letter-spacing: 0.2px;
}

.nav-row {
    width: 240px;
    height: 32px;
    display: flex;
    align-items: center;
    position: relative;
    padding: 0 12px 0 26px;
    color: #202124;
    font-size: 14px;
    border-radius: 0 16px 16px 0;
}

.nav-row.sub {
    padding-left: 39px;
}

.nav-glyph {
    width: 20px;
    height: 20px;
    margin-right: 18px;
    color: #444746;
}

.nav-label {
    flex: 1;
}

.bold .nav-label {
    padding-bottom: 2px;
    font-family: Inter, sans-serif;
    font-weight: 700;
}

.count {
    font-size: 12px;
    color: #6e6e6e;
    font-weight: 400;
}

.selected {
    background-color: #d3e3fd;
    color: #041e49;
}

.selected .nav-glyph {
    color: #041e49;
}

.selected .count {
    color: #041e49;
    font-weight: 700;
}

.tree-caret {
    position: absolute;
    left: 15px;
    top: 14px;
    border-left: 4px solid transparent;
    border-right: 4px solid transparent;
    border-top: 4px solid #444746;
}

.labels-head {
    display: flex;
    align-items: center;
    justify-content: space-between;
    width: 232px;
    margin-top: 27px;
    padding-left: 26px;
    font-size: 16px;
    font-weight: 500;
    letter-spacing: 0.3px;
    color: #444746;
}

.content {
    flex: 1;
    min-width: 0;
    position: relative;
}

.gm-header {
    height: 64px;
    display: flex;
    align-items: center;
    justify-content: space-between;
    padding-right: 18px;
}

.searchbox {
    width: 720px;
    height: 48px;
    display: flex;
    align-items: center;
    padding: 0 16px 0 12px;
    border-radius: 24px;
    background-color: #eaf1fb;
    color: #444746;
}

.search-text {
    flex: 1;
    margin-left: 8px;
    padding-bottom: 2px;
    font-size: 16px;
    color: #5f6368;
}

.header-actions {
    display: flex;
    align-items: center;
    gap: 20px;
    color: #5f6368;
}

.account {
    width: 32px;
    height: 32px;
    border-radius: 50%;
    background-color: #3085d6;
    color: #ffffff;
    font-size: 16px;
    display: flex;
    align-items: center;
    justify-content: center;
}

.card {
    width: 1094px;
    height: 488px;
    border-radius: 16px;
    background-color: #ffffff;
    position: relative;
}

.tool {
    width: 20px;
    height: 20px;
    color: #444746;
}

.mail-toolbar {
    height: 48px;
    display: flex;
    align-items: center;
    gap: 24px;
    padding-left: 16px;
}

.tool-back {
    margin-right: 12px;
}

.tool-sep {
    width: 1px;
    height: 20px;
    margin: 0 -4px 0 -5px;
    background-color: #e8e8e8;
}

.tool-more {
    margin-left: -4px;
}

.pager {
    margin-left: auto;
    font-size: 12px;
    color: #5f6368;
}

.tool-prev {
    margin-left: -4px;
    color: #b4b4b4;
}

.tool-next {
    margin-left: -4px;
    margin-right: 32px;
}

.subject-row {
    height: 36px;
    margin-top: 16px;
    display: flex;
    align-items: center;
    padding-left: 72px;
}

.subject {
    margin: 0;
    padding-bottom: 4px;
    font-family: "Open Sans", sans-serif;
    font-size: 22px;
    font-weight: 400;
    letter-spacing: -0.26px;
    color: #1f1f1f;
}

.marker {
    width: 14px;
    height: 10px;
    margin-left: 13px;
    color: #f4c542;
}

.chip {
    height: 18px;
    margin-left: 11px;
    padding: 0 4px;
    display: flex;
    align-items: center;
    gap: 5px;
    border-radius: 3px;
    background-color: #dddddd;
    color: #666666;
    font-size: 12px;
    letter-spacing: 0.2px;
}

.chip i {
    font-style: normal;
    color: #666666;
}

.subject-actions {
    margin-left: auto;
    display: flex;
    gap: 16px;
    padding-right: 32px;
}

.message {
    display: flex;
    margin-top: 14px;
    padding-left: 16px;
}

.avatar {
    width: 40px;
    height: 40px;
    margin-top: 2px;
}

.message-main {
    flex: 1;
    margin-left: 16px;
    min-width: 0;
}

.sender-row {
    height: 24px;
    display: flex;
    align-items: center;
    padding-right: 32px;
}

.sender {
    flex: 1;
    padding-bottom: 2px;
    font-size: 14px;
}

.sender strong {
    font-family: Inter, sans-serif;
    font-weight: 700;
    color: #1f1f1f;
}

.address {
    font-size: 12px;
    letter-spacing: 0.1px;
    color: #5e5e5e;
}

.time {
    font-size: 12px;
    color: #5e5e5e;
}

.msg-star {
    margin-left: 20px;
}

.msg-action {
    margin-left: 20px;
}

.to-me {
    height: 16px;
    font-size: 12px;
    color: #5e5e5e;
    display: flex;
    align-items: center;
    gap: 6px;
}

.to-caret {
    border-left: 4px solid transparent;
    border-right: 4px solid transparent;
    border-top: 4px solid #5e5e5e;
    margin-top: 2px;
}

.body-text {
    margin: 12px 0 0;
    font-family: "Liberation Sans", Arial, sans-serif;
    font-size: 13px;
    line-height: 16px;
    color: #222222;
}

.reply-buttons {
    display: flex;
    gap: 8px;
    margin-top: 40px;
}

.pill-btn {
    height: 36px;
    display: flex;
    align-items: center;
    gap: 9px;
    padding: 0 16px 0 13px;
    border: 1px solid #747775;
    border-radius: 18px;
    color: #444746;
    font-size: 14px;
    font-weight: 500;
    letter-spacing: 0.35px;
}

.pill-btn .tool {
    width: 18px;
    height: 18px;
}

.emoji-btn {
    width: 36px;
    height: 36px;
    display: flex;
    align-items: center;
    justify-content: center;
    border: 1px solid #747775;
    border-radius: 50%;
}

.scroll-thumb {
    position: absolute;
    right: 0;
    top: 48px;
    width: 11px;
    height: 360px;
    background-color: #c4c4c4;
}

.panel-toggle {
    position: absolute;
    right: -16px;
    top: 524px;
    width: 32px;
    height: 32px;
    border-radius: 50%;
    background-color: #ffffff;
    box-shadow: 0 1px 3px rgba(0, 0, 0, 0.3);
    display: flex;
    align-items: center;
    padding-left: 6px;
    color: #1f1f1f;
}

/* ubuntu dock */
.dock {
    height: 52px;
    display: flex;
    align-items: center;
    background-color: #231a22;
    position: relative;
}

.dock-item {
    width: 56px;
    height: 48px;
    display: flex;
    align-items: center;
    justify-content: center;
    position: relative;
    border-radius: 4px;
}

.dock-item.active {
    width: 48px;
    margin: 0 4px;
    background-color: #4a4048;
}

.dock-icon {
    width: 30px;
    height: 30px;
}

.dock-icon-lg {
    width: 34px;
    height: 34px;
}

.chrome-logo {
    width: 32px;
    height: 32px;
    border-radius: 50%;
    background: conic-gradient(#db4437 0deg 90deg, #f4c20d 90deg 195deg, #0f9d58 195deg 300deg, #db4437 300deg);
    display: flex;
    align-items: center;
    justify-content: center;
}

.chrome-logo::after {
    content: "";
    width: 16px;
    height: 16px;
    border-radius: 50%;
    background-color: #2f7cf0;
    border: 2px solid #ffffff;
}

.dots {
    position: absolute;
    bottom: 0;
    left: 0;
    right: 0;
    display: flex;
    justify-content: center;
    gap: 2px;
}

.dots i {
    width: 4px;
    height: 4px;
    border-radius: 50%;
    background-color: #e9541f;
}

.show-apps {
    margin-left: auto;
    margin-right: 18px;
    display: grid;
    grid-template-columns: repeat(3, 4px);
    gap: 4px;
}

.show-apps i {
    width: 4px;
    height: 4px;
    background-color: #f2f2f2;
}
```
